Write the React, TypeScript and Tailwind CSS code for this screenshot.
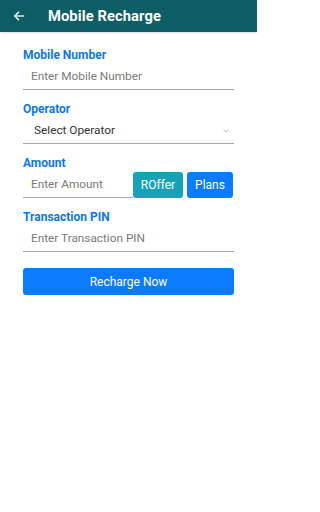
import React from "react";

export default function App() {
  return (
    <div className="w-[257px] h-[512px] bg-white" style={{ fontFamily: "Roboto, 'Noto Sans', sans-serif" }}>
      <div className="h-[32px] bg-[#0c5d66] flex items-center shadow-sm">
        <svg className="ml-[13px]" width="12" height="12" viewBox="0 0 24 24" fill="none" stroke="white" strokeWidth="2.6" strokeLinecap="square">
          <path d="M21 12H4" />
          <path d="M11 4.5L3.5 12L11 19.5" />
        </svg>
        <span className="ml-[23px] text-white text-[14.7px] font-bold tracking-[0.1px]">Mobile Recharge</span>
      </div>
      <div className="px-[23px] pt-[16px] flex flex-col">
        <div className="text-[#0b78e8] text-[12px] font-bold leading-[14px] h-[14px]">Mobile Number</div>
        <div className="h-[28px] border-b border-[#a9a9a9] flex items-center pt-[2px] pl-[8px] text-[#7a7a7a] text-[11.8px]">Enter Mobile Number</div>

        <div className="mt-[12px] text-[#0b78e8] text-[12px] font-bold leading-[14px] h-[14px]">Operator</div>
        <div className="h-[28px] border-b border-[#a9a9a9] flex items-center pt-[2px] pl-[11px] pr-[5px] text-[#333] text-[11.8px]">
          <span className="flex-1">Select Operator</span>
          <svg width="6" height="4" viewBox="0 0 6 4" fill="none" stroke="#b0b0b0" strokeWidth="0.8">
            <path d="M0.5 0.5L3 3L5.5 0.5" />
          </svg>
        </div>

        <div className="mt-[12px] text-[#0b78e8] text-[12px] font-bold leading-[14px] h-[14px]">Amount</div>
        <div className="flex h-[28px]">
          <div className="w-[110px] h-full border-b border-[#a9a9a9] flex items-center pl-[8px] text-[#7a7a7a] text-[11.8px] pt-[2px]">Enter Amount</div>
          <button className="mt-[2px] w-[50px] h-[26px] bg-[#17a2b8] text-white text-[12px] rounded-[3px]">ROffer</button>
          <button className="mt-[2px] ml-[4px] w-[46px] h-[26px] bg-[#0a7bff] text-white text-[12px] rounded-[3px]">Plans</button>
        </div>

        <div className="mt-[12px] text-[#0b78e8] text-[12px] font-bold leading-[14px] h-[14px]">Transaction PIN</div>
        <div className="h-[28px] border-b border-[#a9a9a9] flex items-center pt-[2px] pl-[8px] text-[#7a7a7a] text-[11.8px]">Enter Transaction PIN</div>

        <button className="mt-[16px] h-[27px] w-full bg-[#0a7bff] text-white text-[12px] rounded-[3px]">Recharge Now</button>
      </div>
    </div>
  );
}
